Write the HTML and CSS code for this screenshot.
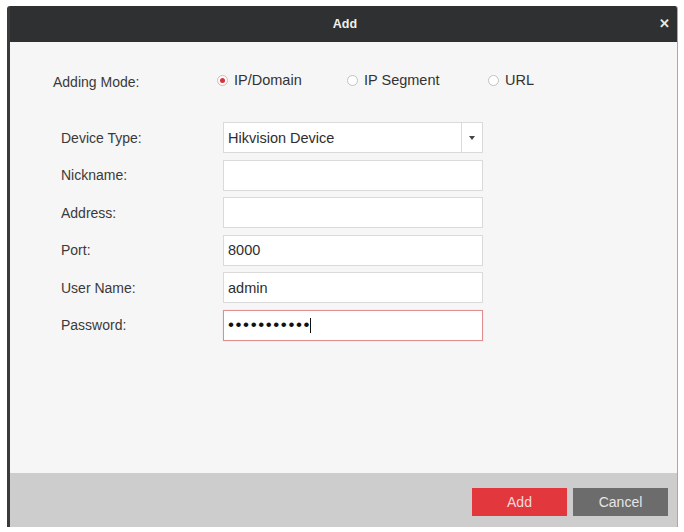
FILE: index.html
```html
<!DOCTYPE html>
<html>
<head>
<meta charset="utf-8">
<link rel="stylesheet" href="styles.css">
</head>
<body>
<div class="dialog">
  <div class="titlebar">
    <span class="title">Add</span>
    <span class="close">&#x2715;</span>
  </div>
  <div class="content">
    <div class="mode-row">
      <span class="mode-label">Adding Mode:</span>
      <span class="radio radio-a"><span class="dot checked"></span>IP/Domain</span>
      <span class="radio radio-b"><span class="dot"></span>IP Segment</span>
      <span class="radio"><span class="dot"></span>URL</span>
    </div>
    <div class="form">
      <span class="label">Device Type:</span>
      <div class="field select"><span class="val">Hikvision Device</span><span class="arrow"></span></div>
      <span class="label">Nickname:</span>
      <div class="field"></div>
      <span class="label">Address:</span>
      <div class="field"></div>
      <span class="label">Port:</span>
      <div class="field"><span class="val">8000</span></div>
      <span class="label">User Name:</span>
      <div class="field"><span class="val">admin</span></div>
      <span class="label">Password:</span>
      <div class="field pwd"><span class="dots">•••••••••••</span><span class="caret"></span></div>
    </div>
  </div>
  <div class="footer">
    <button class="btn btn-add">Add</button>
    <button class="btn btn-cancel">Cancel</button>
  </div>
</div>
</body>
</html>
```

FILE: styles.css
```css
html, body {
  margin: 0;
  background: #ffffff;
}
body {
  padding: 6px 0 0 7px;
  font-family: "Liberation Sans", Arial, sans-serif;
  font-size: 14px;
  color: #3a3a3a;
}
.dialog {
  width: 671px;
  height: 521px;
  box-sizing: border-box;
  display: flex;
  flex-direction: column;
  border-left: 3px solid #3a3a3a;
  border-right: 1px solid #a8a8a8;
  border-radius: 3px 3px 0 0;
  overflow: hidden;
  background: #f6f6f6;
}
.titlebar {
  height: 36px;
  flex: none;
  background: #2e3031;
  display: flex;
  align-items: center;
  justify-content: center;
  position: relative;
}
.title {
  color: #f0f0f0;
  font-weight: bold;
  font-size: 12.5px;
  margin-left: 3px;
}
.close {
  position: absolute;
  right: 7px;
  top: 10px;
  color: #e8e8e8;
  font-size: 13px;
  font-weight: bold;
}
.content {
  flex: 1;
  padding: 28px 0 0 43px;
  background: #f6f6f6;
}
.mode-row {
  display: flex;
  align-items: center;
  height: 20px;
}
.mode-label {
  width: 164px;
  margin-top: 4px;
}
.radio {
  display: flex;
  align-items: center;
  gap: 6px;
  color: #333;
  font-size: 14.5px;
}
.radio-a { width: 130px; }
.radio-b { width: 141px; }
.dot {
  width: 11px;
  height: 11px;
  box-sizing: border-box;
  border-radius: 50%;
  border: 1px solid #c2c2c2;
  background: #fff;
  display: flex;
  align-items: center;
  justify-content: center;
}
.dot.checked {
  border-color: #e6aeb0;
}
.dot.checked::after {
  content: "";
  width: 5px;
  height: 5px;
  border-radius: 50%;
  background: #d4343c;
}
.form {
  margin: 32px 0 0 8px;
  display: grid;
  grid-template-columns: 162px 260px;
  grid-auto-rows: 31px;
  row-gap: 6.6px;
  align-items: center;
}
.label {
  font-size: 14px;
  color: #3a3a3a;
}
.field {
  height: 31px;
  box-sizing: border-box;
  border: 1px solid #dadada;
  background: #fff;
  display: flex;
  align-items: center;
  padding-left: 4px;
  font-size: 14.5px;
  color: #2e2e2e;
}
.select .val {
  flex: 1;
}
.arrow {
  width: 20px;
  height: 100%;
  border-left: 1px solid #dadada;
  display: flex;
  align-items: center;
  justify-content: center;
}
.arrow::after {
  content: "";
  border-left: 3px solid transparent;
  border-right: 3px solid transparent;
  border-top: 4px solid #444;
}
.pwd {
  border-color: #df8d8f;
  box-shadow: 0 0 1px #f2c8c9;
}
.dots {
  font-size: 17px;
  letter-spacing: 1.6px;
  color: #111;
  margin-right: -1px;
}
.caret {
  width: 1px;
  height: 15px;
  background: #111;
}
.footer {
  height: 54px;
  flex: none;
  background: #cdcdcd;
  display: flex;
  justify-content: flex-end;
  align-items: flex-start;
  gap: 6px;
  padding: 15px 9px 0 0;
  box-sizing: border-box;
}
.btn {
  width: 95px;
  height: 28px;
  border: none;
  font-family: "Liberation Sans", Arial, sans-serif;
  font-size: 14px;
  padding: 0;
}
.btn-add {
  background: #e2383d;
  color: #f6dcdc;
}
.btn-cancel {
  background: #6c6c6c;
  color: #e6e6e6;
}
```
